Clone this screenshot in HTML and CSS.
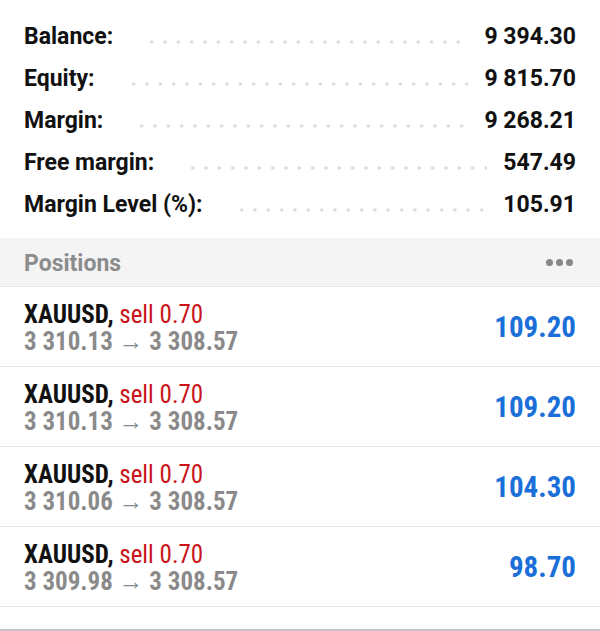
FILE: index.html
```html
<!DOCTYPE html>
<html lang="en">

<head>
    <meta charset="UTF-8">
    <meta name="viewport" content="width=device-width, initial-scale=1.0">
    <title>Positions</title>
    <link rel="stylesheet" href="styles.css">
</head>

<body>
    <div class="summary">
        <div class="row"><span class="label">Balance:</span><span class="dots"></span><span class="value">9 394.30</span></div>
        <div class="row"><span class="label">Equity:</span><span class="dots"></span><span class="value">9 815.70</span></div>
        <div class="row"><span class="label">Margin:</span><span class="dots"></span><span class="value">9 268.21</span></div>
        <div class="row"><span class="label">Free margin:</span><span class="dots"></span><span class="value">547.49</span></div>
        <div class="row"><span class="label">Margin Level (%):</span><span class="dots"></span><span class="value">105.91</span></div>
    </div>

    <div class="section-head">
        <span class="title">Positions</span>
        <span class="more"><i></i><i></i><i></i></span>
    </div>

    <div class="positions">
        <div class="position">
            <div class="info">
                <p class="deal"><b>XAUUSD,</b> <span class="sell">sell 0.70</span></p>
                <p class="prices">3 310.13 &rarr; 3 308.57</p>
            </div>
            <p class="profit">109.20</p>
        </div>
        <div class="position">
            <div class="info">
                <p class="deal"><b>XAUUSD,</b> <span class="sell">sell 0.70</span></p>
                <p class="prices">3 310.13 &rarr; 3 308.57</p>
            </div>
            <p class="profit">109.20</p>
        </div>
        <div class="position">
            <div class="info">
                <p class="deal"><b>XAUUSD,</b> <span class="sell">sell 0.70</span></p>
                <p class="prices">3 310.06 &rarr; 3 308.57</p>
            </div>
            <p class="profit">104.30</p>
        </div>
        <div class="position">
            <div class="info">
                <p class="deal"><b>XAUUSD,</b> <span class="sell">sell 0.70</span></p>
                <p class="prices">3 309.98 &rarr; 3 308.57</p>
            </div>
            <p class="profit">98.70</p>
        </div>
    </div>

    <div class="bottom-bar"></div>
</body>

</html>
```

FILE: styles.css
```css
* {
    margin: 0;
    padding: 0;
    box-sizing: border-box;
    font-family: Roboto, "Liberation Sans", sans-serif;
}

body {
    width: 600px;
    height: 631px;
    background: #fff;
    overflow: hidden;
    display: flex;
    flex-direction: column;
}

.summary {
    padding: 16px 24px 12px;
}

.summary .row {
    display: flex;
    align-items: baseline;
    height: 42px;
    font-size: 23px;
    font-weight: 700;
    color: #111;
    line-height: 42px;
}

.row .dots {
    flex: 1;
    height: 4px;
    margin: 0 16px 0 32px;
    background: radial-gradient(circle, #dddddd 1.4px, transparent 1.9px) left center / 13.33px 4px repeat-x;
}

.section-head {
    display: flex;
    align-items: center;
    justify-content: space-between;
    height: 49px;
    padding: 0 24px;
    background: #f4f4f4;
    border-bottom: 1px solid #e6e6e6;
    font-size: 23px;
    font-weight: 700;
    color: #8c8c8c;
}

.section-head .title {
    padding-top: 3px;
}

.more {
    display: flex;
    gap: 3px;
    margin-right: 3px;
}

.more i {
    width: 7px;
    height: 7px;
    border-radius: 50%;
    background: #888;
}

.position {
    display: flex;
    align-items: center;
    justify-content: space-between;
    height: 80px;
    padding: 0 24px;
    border-bottom: 1px solid #e6e6e6;
    font-stretch: condensed;
}

.info {
    padding-top: 2px;
}

.info p {
    font-size: 25px;
    line-height: 27px;
}

.deal b {
    color: #111;
    font-weight: 700;
}

.deal .sell {
    color: #c8141a;
}

.prices {
    color: #8a8a8a;
    font-weight: 700;
}

.profit {
    font-size: 29px;
    font-weight: 700;
    color: #1a6fd8;
}

.bottom-bar {
    margin-top: auto;
    height: 2px;
    background: #c4c4c4;
}
```
